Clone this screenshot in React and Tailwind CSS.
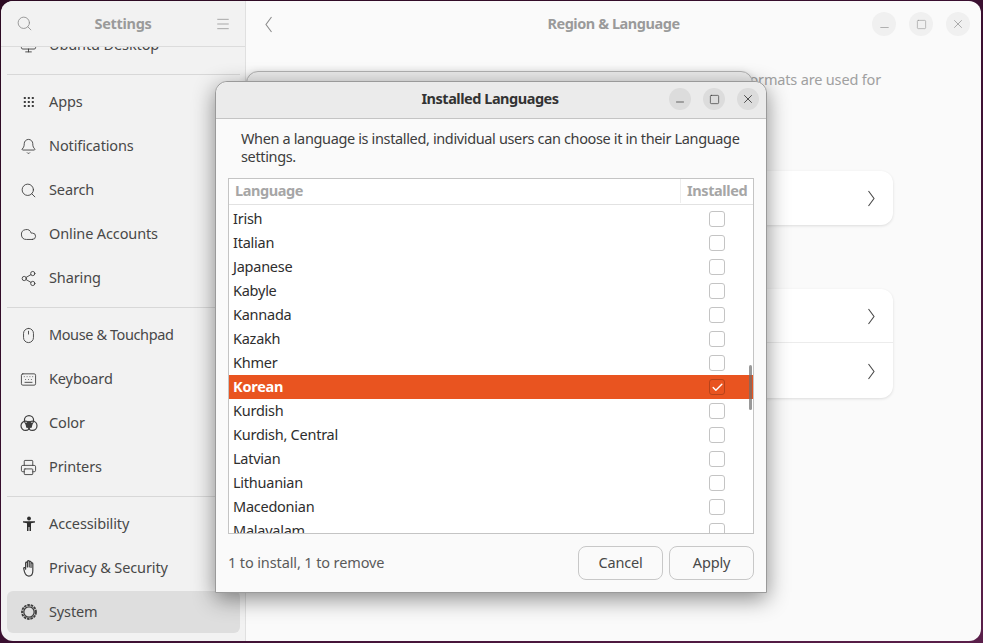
import React from "react";
import { Search, Menu, Bell, Cloud, Share2, Mouse, Keyboard, Printer, Monitor, Minus, Square, X, Check } from "lucide-react";

const FONT = "font-['Noto_Sans',sans-serif]";

const AppsIcon = () => (
  <svg width="16" height="16" viewBox="0 0 16 16" fill="#3d3d3d">
    {[3, 7, 11].map((y) => [3, 7, 11].map((x) => <rect key={`${x}-${y}`} x={x - 0.2} y={y} width="2" height="2" />))}
  </svg>
);

const ColorIcon = () => (
  <svg width="18" height="18" viewBox="0 0 18 18" fill="none" stroke="#3d3d3d" strokeWidth="1.2">
    <circle cx="9" cy="6.2" r="4.6" />
    <circle cx="5.6" cy="11.8" r="4.6" />
    <circle cx="12.4" cy="11.8" r="4.6" />
    <path d="M9 7.5l3 2.2-.8 3.5H6.8L6 9.700z" fill="#3d3d3d" />
  </svg>
);

const AccessIcon = () => (
  <svg width="16" height="16" viewBox="0 0 16 16" fill="#2e2e2e">
    <circle cx="8" cy="2.500" r="1.900" />
    <path d="M2 5.200h12v1.400l-4 .6V15H8.500v-4h-1v4H6V7.200l-4-.6z" />
  </svg>
);

const GearIcon = () => (
  <svg width="18" height="18" viewBox="0 0 18 18" fill="none" stroke="#3d3d3d">
    <circle cx="9" cy="9" r="5.200" strokeWidth="1.300" />
    <circle cx="9" cy="9" r="7" strokeWidth="1.800" strokeDasharray="2.600 0.850" />
  </svg>
);

const HandIcon = () => (
  <svg width="18" height="18" viewBox="0 0 16 16" fill="none" stroke="#3d3d3d" strokeWidth="1.050" strokeLinecap="round" strokeLinejoin="round">
    <path d="M5 9V3.500a.8.8 0 0 1 1.600 0V7M6.600 7V2.200a.8.8 0 0 1 1.600 0V7M8.200 7V2.800a.8.8 0 0 1 1.600 0V7M9.800 7.500V4.200a.8.8 0 0 1 1.600 0V10.500c0 3-1.500 4.700-3.500 4.700S4.800 14 4 11.500L3.300 8.500c-.2-1 1-1.300 1.400-.4L5 9" />
  </svg>
);

// tall narrow chevron used by the GNOME rows
const Chevron = ({ left, color }) => (
  <svg width="8" height="17" viewBox="0 0 8 17" fill="none" stroke={color} strokeWidth="1.100">
    <path d={left ? "M6.500 1L1 8.500l5.500 7.500" : "M1.500 1L7 8.500l-5.500 7.500"} />
  </svg>
);

const ic = { size: 17, strokeWidth: 1.25, color: "#3d3d3d" };

const groups = [
  [{ label: "Apps", icon: <AppsIcon /> }, { label: "Notifications", icon: <Bell {...ic} /> }, { label: "Search", icon: <Search {...ic} /> }, { label: "Online Accounts", icon: <Cloud {...ic} /> }, { label: "Sharing", icon: <Share2 {...ic} /> }],
  [{ label: "Mouse & Touchpad", icon: <Mouse {...ic} />, tight: true }, { label: "Keyboard", icon: <Keyboard {...ic} /> }, { label: "Color", icon: <ColorIcon /> }, { label: "Printers", icon: <Printer {...ic} /> }],
  [{ label: "Accessibility", icon: <AccessIcon /> }, { label: "Privacy & Security", icon: <HandIcon /> }, { label: "System", icon: <GearIcon />, active: true }],
];

const languages = ["Irish", "Italian", "Japanese", "Kabyle", "Kannada", "Kazakh", "Khmer", "Korean", "Kurdish", "Kurdish, Central", "Latvian", "Lithuanian", "Macedonian", "Malayalam"];

const SideRow = ({ label, icon, active, tight }) => (
  <div className="h-[44px] py-px pl-[6px] pr-[5px]">
    <div className={`flex items-center h-[42px] rounded-md ${active ? "bg-[#dedede]" : ""}`}>
      <span className="w-[42px] shrink-0 flex justify-center pl-[1px]">{icon}</span>
      <span className={`text-[14.5px] text-[#484848] ${tight ? "tracking-[-0.4px]" : "tracking-[-0.12px]"}`}>{label}</span>
    </div>
  </div>
);

const Sep = () => <div className="h-px mt-[7px] mb-[5px] ml-[6px] mr-[5px] bg-[#d8d8d8]" />;

const Sidebar = () => (
  <div className="w-[245px] shrink-0 bg-[#f2f2f2] border-r border-[#e0e0e0] rounded-l-[12px] flex flex-col overflow-hidden">
    <div className="relative z-10 h-[46px] shrink-0 bg-[#f2f2f2] border-b border-[#dcdcdc] flex items-center justify-between pl-[15px] pr-[14px]">
      <Search size={17} strokeWidth={1.2} color="#8c8c8c" />
      <span className="text-[14.5px] font-bold tracking-[-0.3px] text-[#9a9a9a] pr-[2px]">Settings</span>
      <Menu size={16} strokeWidth={1.1} color="#8c8c8c" />
    </div>
    <div className="-mt-[24px]">
      <SideRow label="Ubuntu Desktop" icon={<Monitor {...ic} />} />
      {groups.map((g, i) => (
        <div key={i}>
          <Sep />
          {g.map((r) => <SideRow key={r.label} {...r} />)}
        </div>
      ))}
    </div>
  </div>
);

const WinBtn = ({ big, dark, children }) => (
  <span className={`flex items-center justify-center rounded-full ${big ? "w-[24px] h-[24px] bg-[#f0f0f0]" : "w-[22px] h-[22px] bg-[#dcdcdc]"} ${dark ? "text-[#2e2e2e]" : "text-[#8c8c8c]"}`}>
    {children}
  </span>
);

const NavCard = ({ rows }) => (
  <div className="w-[560px] rounded-xl bg-white shadow-[0_1px_3px_rgba(0,0,0,0.12)] flex flex-col divide-y divide-[#ececec]">
    {Array.from({ length: rows }).map((_, i) => (
      <div key={i} className="h-[54.5px] flex items-center justify-end pr-[18px] pt-px">
        <Chevron color="#4a4a4a" />
      </div>
    ))}
  </div>
);

const Main = () => (
  <div className="flex-1 bg-[#fafafa] rounded-r-[12px] flex flex-col">
    <div className="h-[46px] shrink-0 flex items-center pl-[19px] pr-[11px]">
      <Chevron left color="#8c8c8c" />
      <span className="flex-1 text-center text-[14.5px] font-bold tracking-[-0.45px] text-[#9a9a9a] pl-[82px]">Region &amp; Language</span>
      <div className="flex gap-[13px]">
        <WinBtn big><Minus size={13} strokeWidth={1.2} className="mt-[6px]" /></WinBtn>
        <WinBtn big><Square size={11} strokeWidth={1.2} /></WinBtn>
        <WinBtn big><X size={14} strokeWidth={1.2} /></WinBtn>
      </div>
    </div>
    <div className="flex flex-col items-end pr-[88px]">
      <p className="mt-[22px] text-[14.5px] tracking-[-0.17px] text-[#a0a0a0] pr-[12px]">Formats are used for</p>
      <div className="mt-[80px]"><NavCard rows={1} /></div>
      <div className="mt-[63.5px]"><NavCard rows={2} /></div>
    </div>
  </div>
);

const Checkbox = ({ checked }) => (
  <span className={`flex items-center justify-center w-[16px] h-[16px] rounded-[3px] border ${checked ? "bg-[#e95420] border-[#b8431a]" : "bg-white border-[#c4c4c4]"}`}>
    {checked && <Check size={13} strokeWidth={2.6} color="#fff" />}
  </span>
);

const LangRow = ({ name }) => {
  const on = name === "Korean";
  return (
    <div className={`flex items-center justify-between h-[24px] shrink-0 pl-[4px] pr-[28px] text-[14.5px] tracking-[-0.25px] ${on ? "bg-[#e95420] text-white font-bold" : "text-[#2e2e2e]"}`}>
      <span>{name}</span>
      <Checkbox checked={on} />
    </div>
  );
};

const Dialog = () => (
  <div className="absolute left-[215px] top-[81px] w-[552px] h-[512px] z-20 flex flex-col rounded-t-[12px] bg-[#fafafa] border border-[#9a9a9a] shadow-[0_6px_22px_rgba(0,0,0,0.45)]">
    <div className="h-[37px] shrink-0 flex items-center rounded-t-[12px] bg-[#ebebeb] border-b border-[#c4c4c4] pr-[7px] pb-[2px]">
      <span className="flex-1 text-center text-[14.5px] font-bold tracking-[-0.47px] text-[#333333] pl-[95px]">Installed Languages</span>
      <div className="flex gap-[12px]">
        <WinBtn dark><Minus size={12} strokeWidth={1.4} className="mt-[6px]" /></WinBtn>
        <WinBtn dark><Square size={11} strokeWidth={1.4} /></WinBtn>
        <WinBtn dark><X size={14} strokeWidth={1.4} /></WinBtn>
      </div>
    </div>
    <p className="mt-[10px] ml-[25px] mr-[12px] text-[14.5px] leading-[18px] tracking-[-0.36px] text-[#3d3d3d]">
      When a language is installed, individual users can choose it in their Language settings.
    </p>
    <div className="relative mt-[13px] ml-[12px] mr-[12px] h-[356px] shrink-0 border border-[#c4c4c4] bg-white flex flex-col overflow-hidden">
      <div className="h-[26px] shrink-0 flex border-b border-[#e2e2e2] pb-px text-[14.5px] font-bold tracking-[-0.4px] text-[#a6a6a6]">
        <span className="flex-1 pl-[6px] flex items-center">Language</span>
        <span className="w-[73px] border-l border-[#ededed] pl-[6px] flex items-center">Installed</span>
      </div>
      <div className="pt-[2px] flex flex-col">
        {languages.map((l) => <LangRow key={l} name={l} />)}
      </div>
      <span className="absolute right-[1px] top-[186px] w-[3px] h-[45px] rounded-full bg-[#6e6e6e]/70" />
    </div>
    <div className="flex-1 flex items-center justify-between ml-[12px] mr-[12px] pb-[1px]">
      <span className="text-[14.5px] tracking-[-0.12px] text-[#5a5a5a]">1 to install, 1 to remove</span>
      <div className="flex gap-[6px]">
        <button className="w-[85px] h-[34px] rounded-lg border border-[#c8c8c8] bg-[#fafafa] text-[14.5px] tracking-[-0.17px] text-[#484848]">Cancel</button>
        <button className="w-[85px] h-[34px] rounded-lg border border-[#c8c8c8] bg-[#fafafa] text-[14.5px] tracking-[-0.17px] text-[#484848]">Apply</button>
      </div>
    </div>
  </div>
);

export default function App() {
  return (
    <div className={`relative w-[983px] h-[643px] overflow-hidden bg-gradient-to-br from-[#2c0a22] via-[#3a0f30] to-[#5a1f4a] pt-px pl-px pr-[2px] pb-[2px] ${FONT}`}>
      <div className="flex h-full">
        <Sidebar />
        <Main />
      </div>
      {/* parent dialog, mostly hidden behind the front one */}
      <div className="absolute left-[246px] top-[71px] w-[507px] h-[480px] z-10 rounded-t-[12px] bg-[#ebebeb] border border-[#b0b0b0] shadow-[0_2px_8px_rgba(0,0,0,0.2)]" />
      <Dialog />
    </div>
  );
}
